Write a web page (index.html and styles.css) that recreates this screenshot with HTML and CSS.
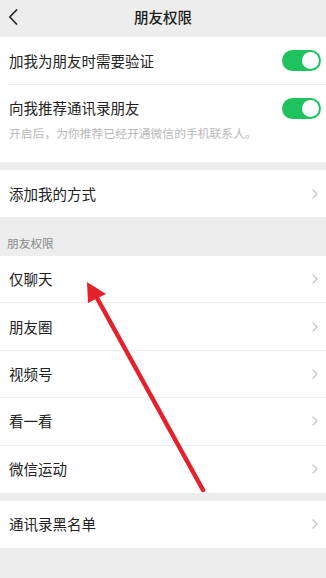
FILE: index.html
```html
<!DOCTYPE html>
<html lang="zh">
<head>
<meta charset="utf-8">
<title>朋友权限</title>
<link rel="stylesheet" href="styles.css">
</head>
<body>
<div class="page">
  <header class="topbar">
    <span class="back">
      <svg width="10" height="16" viewBox="0 0 10 16"><path d="M8.5 1 L1.8 8 L8.5 15" fill="none" stroke="#2b2b2b" stroke-width="1.8" stroke-linecap="round" stroke-linejoin="round"/></svg>
    </span>
    <h1 class="title">朋友权限</h1>
    <span></span>
  </header>

  <section class="group">
    <div class="row row-first">
      <span class="label">加我为朋友时需要验证</span>
      <span class="switch"><span class="knob"></span></span>
    </div>
    <div class="divider"></div>
    <div class="row-block">
      <div class="row row-compact">
        <span class="label">向我推荐通讯录朋友</span>
        <span class="switch"><span class="knob"></span></span>
      </div>
      <p class="note">开启后，为你推荐已经开通微信的手机联系人。</p>
    </div>
  </section>

  <section class="group gap">
    <div class="row">
      <span class="label">添加我的方式</span>
      <span class="chev"><svg width="6" height="10" viewBox="0 0 6 10"><path d="M1 1 L5 5 L1 9" fill="none" stroke="#c4c4c4" stroke-width="1.3" stroke-linecap="round" stroke-linejoin="round"/></svg></span>
    </div>
  </section>

  <div class="section-title">朋友权限</div>

  <section class="group list">
    <div class="row lrow"><span class="label">仅聊天</span><span class="chev"><svg width="6" height="10" viewBox="0 0 6 10"><path d="M1 1 L5 5 L1 9" fill="none" stroke="#c4c4c4" stroke-width="1.3" stroke-linecap="round" stroke-linejoin="round"/></svg></span></div>
    <div class="row lrow"><span class="label">朋友圈</span><span class="chev"><svg width="6" height="10" viewBox="0 0 6 10"><path d="M1 1 L5 5 L1 9" fill="none" stroke="#c4c4c4" stroke-width="1.3" stroke-linecap="round" stroke-linejoin="round"/></svg></span></div>
    <div class="row lrow"><span class="label">视频号</span><span class="chev"><svg width="6" height="10" viewBox="0 0 6 10"><path d="M1 1 L5 5 L1 9" fill="none" stroke="#c4c4c4" stroke-width="1.3" stroke-linecap="round" stroke-linejoin="round"/></svg></span></div>
    <div class="row lrow"><span class="label">看一看</span><span class="chev"><svg width="6" height="10" viewBox="0 0 6 10"><path d="M1 1 L5 5 L1 9" fill="none" stroke="#c4c4c4" stroke-width="1.3" stroke-linecap="round" stroke-linejoin="round"/></svg></span></div>
    <div class="row lrow"><span class="label">微信运动</span><span class="chev"><svg width="6" height="10" viewBox="0 0 6 10"><path d="M1 1 L5 5 L1 9" fill="none" stroke="#c4c4c4" stroke-width="1.3" stroke-linecap="round" stroke-linejoin="round"/></svg></span></div>
  </section>

  <section class="group gap">
    <div class="row">
      <span class="label">通讯录黑名单</span>
      <span class="chev"><svg width="6" height="10" viewBox="0 0 6 10"><path d="M1 1 L5 5 L1 9" fill="none" stroke="#c4c4c4" stroke-width="1.3" stroke-linecap="round" stroke-linejoin="round"/></svg></span>
    </div>
  </section>

  <svg class="annot" width="326" height="578" viewBox="0 0 326 578">
    <line x1="203" y1="490" x2="97" y2="298" stroke="#e5212b" stroke-width="4.5" stroke-linecap="round"/>
    <polygon points="87,282 88,303 106,294" fill="#e5212b"/>
  </svg>
</div>
</body>
</html>
```

FILE: styles.css
```css
* { box-sizing: border-box; }
html, body {
  margin: 0;
  padding: 0;
  background: #ededed;
}
body {
  font-family: "Noto Sans CJK SC", "Noto Sans", sans-serif;
  color: #222;
}
.page {
  position: relative;
  width: 326px;
  height: 578px;
  overflow: hidden;
  background: #ededed;
}
.topbar {
  height: 37px;
  display: grid;
  grid-template-columns: 40px 1fr 40px;
  align-items: center;
  padding-bottom: 4px;
}
.back {
  display: flex;
  align-items: center;
  padding-left: 8px;
}
.title {
  margin: 0;
  text-align: center;
  font-size: 14.5px;
  font-weight: 500;
  color: #1b1b1b;
  line-height: 18px;
}
.group {
  background: #fff;
}
.gap {
  margin-top: 8px;
}
.row {
  height: 47px;
  display: flex;
  align-items: center;
  justify-content: space-between;
  padding: 0 8px 0 9px;
}
.row-first {
  height: 47px;
  padding-right: 5px;
}
.divider {
  height: 1px;
  margin-left: 8px;
  background: #ececec;
}
.row-block {
  padding-top: 7px;
  padding-bottom: 20px;
}
.row-compact {
  height: 32px;
  padding-right: 5px;
}
.label {
  font-size: 14.5px;
  line-height: 18px;
  color: #222;
}
.note {
  margin: 0;
  padding-left: 9px;
  font-size: 11.8px;
  line-height: 18px;
  color: #b8b8b8;
}
.switch {
  width: 39px;
  height: 21px;
  border-radius: 11px;
  background: #1ec25e;
  display: flex;
  align-items: center;
  justify-content: flex-end;
  padding-right: 2px;
}
.knob {
  width: 17px;
  height: 17px;
  border-radius: 50%;
  background: #fff;
}
.chev {
  display: flex;
  align-items: center;
}
.section-title {
  height: 39px;
  padding: 18px 0 0 7px;
  font-size: 11.7px;
  line-height: 16px;
  color: #8a8a8a;
}
.list .lrow {
  height: 47.4px;
  border-bottom: 1px solid #ececec;
}
.list .lrow:last-child {
  border-bottom: none;
}
.annot {
  position: absolute;
  left: 0;
  top: 0;
  pointer-events: none;
}
```
